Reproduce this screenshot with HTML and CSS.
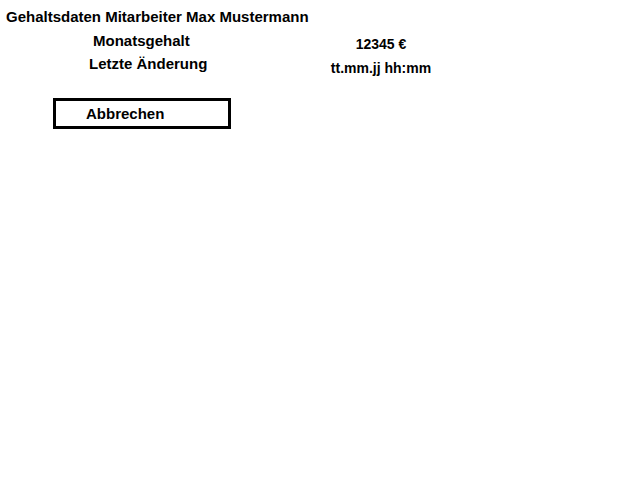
FILE: index.html
```html
<!DOCTYPE html>
<html>
<head>
<meta charset="utf-8">
<link rel="stylesheet" href="styles.css">
</head>
<body>
<div class="page">
  <h1 class="title">Gehaltsdaten Mitarbeiter Max Mustermann</h1>
  <div class="details">
    <div class="labels">
      <div class="label label-salary">Monatsgehalt</div>
      <div class="label label-changed">Letzte Änderung</div>
    </div>
    <div class="values">
      <div class="value">12345 €</div>
      <div class="value">tt.mm.jj hh:mm</div>
    </div>
  </div>
  <button class="cancel">Abbrechen</button>
</div>
</body>
</html>
```

FILE: styles.css
```css
html, body {
  margin: 0;
  padding: 0;
  background: #fff;
}
.page {
  font-family: "Liberation Sans", Arial, sans-serif;
  font-weight: bold;
  font-size: 15px;
  color: #000;
  padding-top: 8px;
}
.title {
  margin: 0;
  padding-left: 6px;
  font-size: 15px;
  line-height: 17px;
}
.details {
  display: flex;
  align-items: flex-start;
}
.labels {
  width: 281px;
  padding-top: 7px;
  display: flex;
  flex-direction: column;
  gap: 6px;
}
.label {
  line-height: 17px;
}
.label-salary {
  padding-left: 93px;
}
.label-changed {
  padding-left: 89px;
}
.values {
  width: 200px;
  padding-top: 11px;
  display: flex;
  flex-direction: column;
  gap: 8px;
  text-align: center;
  font-size: 14px;
}
.value {
  line-height: 16px;
}
.cancel {
  display: block;
  margin: 22px 0 0 53px;
  width: 178px;
  height: 31px;
  border: 3px solid #000;
  background: #fff;
  font-family: "Liberation Sans", Arial, sans-serif;
  font-weight: bold;
  font-size: 15px;
  color: #000;
  text-align: left;
  padding: 0 0 0 30px;
  box-sizing: border-box;
}
```
